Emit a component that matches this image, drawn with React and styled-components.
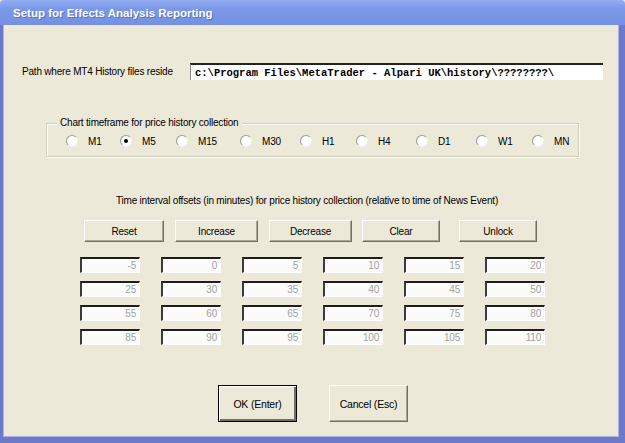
import React from "react";
import styled, { createGlobalStyle } from "styled-components";

const GlobalStyle = createGlobalStyle`
  html, body {
    margin: 0;
    padding: 0;
    background: #ece9d8;
  }
  * {
    box-sizing: border-box;
  }
`;

const Window = styled.div`
  width: 625px;
  height: 443px;
  display: flex;
  flex-direction: column;
  background: #ece9d8;
  font-family: "Liberation Sans", Arial, sans-serif;
  font-size: 10px;
  letter-spacing: -0.2px;
  color: #000;
  overflow: hidden;
`;

const TitleBar = styled.div`
  height: 25px;
  flex: none;
  display: flex;
  align-items: center;
  padding-left: 13px;
  background: linear-gradient(#93adf2 0%, #7b98e8 35%, #7490e2 100%);
  border-top-left-radius: 4px;
  border-top-right-radius: 4px;
  color: #fff;
  font-weight: bold;
  font-size: 11.5px;
  letter-spacing: 0;
  text-shadow: 1px 1px 0 #5a6fc0;
`;

const Frame = styled.div`
  flex: 1;
  display: flex;
  flex-direction: column;
  border-left: 3px solid #6e78c8;
  border-right: 6px solid #6e78c8;
  border-bottom: 6px solid #6e78c8;
  box-shadow: inset 1px 0 0 #aab4ea, inset -1px -1px 0 #aab4ea;
`;

const PathRow = styled.div`
  display: flex;
  align-items: center;
  margin-top: 38px;
  padding-left: 19px;
`;

const PathLabel = styled.span`
  width: 168px;
  white-space: nowrap;
`;

const PathInput = styled.div`
  width: 413px;
  height: 17px;
  background: #fff;
  border-top: 2px solid #222;
  border-left: 1px solid #888;
  padding-left: 4px;
  display: flex;
  align-items: center;
  font-family: "Liberation Mono", "Courier New", monospace;
  font-weight: bold;
  font-size: 10.5px;
  letter-spacing: 0;
  white-space: pre;
`;

const GroupBox = styled.div`
  position: relative;
  margin: 43px 0 0 43px;
  width: 533px;
  height: 34px;
  padding: 0 0 0 19px;
  border: 1px solid #d0d0bf;
  box-shadow: inset 1px 1px 0 #fff, 1px 1px 0 #fff;
  display: flex;
  align-items: center;
`;

const Legend = styled.span`
  position: absolute;
  top: -7px;
  left: 10px;
  padding: 0 3px;
  line-height: 12px;
  background: #ece9d8;
`;

const RadioItem = styled.label`
  display: flex;
  align-items: center;
  width: ${(p) => p.$w}px;
  flex: none;
  margin-top: 2px;
`;

const RadioCircle = styled.span`
  width: 12px;
  height: 12px;
  border-radius: 50%;
  background: #fff;
  border: 1px solid;
  border-color: #9c9a8c #f4f3ee #f4f3ee #9c9a8c;
  margin-right: 10px;
  display: flex;
  align-items: center;
  justify-content: center;
  &::after {
    content: "";
    width: 4px;
    height: 4px;
    border-radius: 50%;
    background: ${(p) => (p.$checked ? "#000" : "transparent")};
  }
`;

const Caption = styled.div`
  margin-top: 38px;
  text-align: center;
  line-height: 12px;
  padding-right: 8px;
`;

const ButtonRow = styled.div`
  display: flex;
  margin-top: 13px;
  padding-left: 81px;
`;

const Button = styled.button`
  width: ${(p) => p.$w}px;
  height: 22px;
  margin-right: ${(p) => p.$gap}px;
  flex: none;
  padding: 0;
  font: inherit;
  letter-spacing: inherit;
  background: #ece9d8;
  border: 1px solid;
  border-color: #fff #716f64 #716f64 #fff;
  box-shadow: inset -1px -1px 0 #aca899;
  color: #000;
`;

const ValueGrid = styled.div`
  display: grid;
  grid-template-columns: repeat(6, 60px);
  column-gap: 21px;
  row-gap: 8px;
  margin-top: 15px;
  padding-left: 77px;
`;

const ValueBox = styled.div`
  height: 16px;
  background: #fbfbf9;
  border: 1px solid;
  border-width: 2px 1px 1px 2px;
  border-color: #1e1e1e #fff #fff #3a3a3a;
  text-align: right;
  padding-right: 3px;
  line-height: 13px;
  color: #a3a3a3;
`;

const FooterRow = styled.div`
  display: flex;
  gap: 32px;
  margin-top: 40px;
  padding-left: 215px;
`;

const DialogButton = styled.button`
  width: 79px;
  height: 37px;
  padding: 0;
  font: inherit;
  font-size: 10.5px;
  letter-spacing: inherit;
  background: #ece9d8;
  border: 1px solid;
  border-color: ${(p) => (p.$default ? "#000" : "#fff #716f64 #716f64 #fff")};
  box-shadow: ${(p) =>
    p.$default
      ? "inset 1px 1px 0 #fff, inset -2px -2px 0 #716f64"
      : "inset -1px -1px 0 #aca899"};
  color: #000;
`;

const timeframes = [
  ["M1", 54, false],
  ["M5", 56, true],
  ["M15", 64, false],
  ["M30", 60, false],
  ["H1", 56, false],
  ["H4", 60, false],
  ["D1", 60, false],
  ["W1", 56, false],
  ["MN", 40, false],
];

const actions = [
  ["Reset", 80, 11],
  ["Increase", 83, 11],
  ["Decrease", 83, 10],
  ["Clear", 78, 19],
  ["Unlock", 78, 0],
];

const offsets = [
  -5, 0, 5, 10, 15, 20, 25, 30, 35, 40, 45, 50, 55, 60, 65, 70, 75, 80, 85,
  90, 95, 100, 105, 110,
];

const App = () => {
  return (
    <>
      <GlobalStyle />
      <Window>
        <TitleBar>Setup for Effects Analysis Reporting</TitleBar>
        <Frame>
          <PathRow>
            <PathLabel>Path where MT4 History files reside</PathLabel>
            <PathInput>
              {"c:\\Program Files\\MetaTrader - Alpari UK\\history\\????????\\"}
            </PathInput>
          </PathRow>

          <GroupBox>
            <Legend>Chart timeframe for price history collection</Legend>
            {timeframes.map(([name, w, checked]) => (
              <RadioItem key={name} $w={w}>
                <RadioCircle $checked={checked} />
                {name}
              </RadioItem>
            ))}
          </GroupBox>

          <Caption>
            Time interval offsets (in minutes) for price history collection
            (relative to time of News Event)
          </Caption>

          <ButtonRow>
            {actions.map(([label, w, gap]) => (
              <Button key={label} $w={w} $gap={gap}>
                {label}
              </Button>
            ))}
          </ButtonRow>

          <ValueGrid>
            {offsets.map((v) => (
              <ValueBox key={v}>{v}</ValueBox>
            ))}
          </ValueGrid>

          <FooterRow>
            <DialogButton $default>OK (Enter)</DialogButton>
            <DialogButton>Cancel (Esc)</DialogButton>
          </FooterRow>
        </Frame>
      </Window>
    </>
  );
};

export default App;
